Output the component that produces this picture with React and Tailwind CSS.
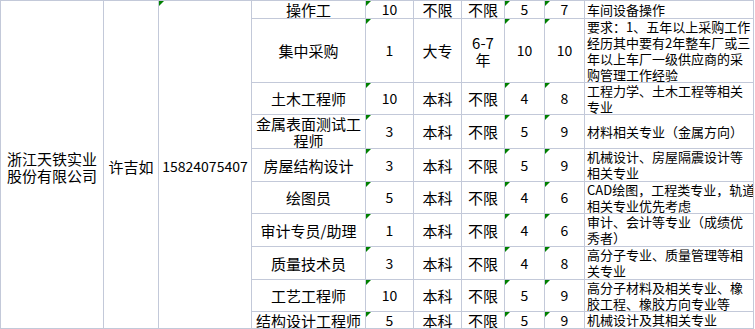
import React from 'react';

const rows = [
  { pos: ['操作工'], count: '10', edu: '不限', exp: ['不限'], min: '5', max: '7', desc: ['车间设备操作'] },
  {
    pos: ['集中采购'], count: '1', edu: '大专', exp: ['6-7', '年'], min: '10', max: '10',
    desc: ['要求：1、五年以上采购工作', '经历其中要有2年整车厂或三', '年以上车厂一级供应商的采', '购管理工作经验'],
  },
  { pos: ['土木工程师'], count: '10', edu: '本科', exp: ['不限'], min: '4', max: '8', desc: ['工程力学、土木工程等相关', '专业'] },
  { pos: ['金属表面测试工', '程师'], count: '3', edu: '本科', exp: ['不限'], min: '5', max: '9', desc: ['材料相关专业（金属方向）'] },
  { pos: ['房屋结构设计'], count: '3', edu: '本科', exp: ['不限'], min: '5', max: '9', desc: ['机械设计、房屋隔震设计等', '相关专业'] },
  { pos: ['绘图员'], count: '5', edu: '本科', exp: ['不限'], min: '4', max: '6', desc: ['CAD绘图，工程类专业，轨道', '相关专业优先考虑'] },
  { pos: ['审计专员/助理'], count: '1', edu: '本科', exp: ['不限'], min: '4', max: '6', desc: ['审计、会计等专业（成绩优', '秀者）'] },
  { pos: ['质量技术员'], count: '3', edu: '本科', exp: ['不限'], min: '4', max: '8', desc: ['高分子专业、质量管理等相', '关专业'] },
  { pos: ['工艺工程师'], count: '10', edu: '本科', exp: ['不限'], min: '5', max: '9', desc: ['高分子材料及相关专业、橡', '胶工程、橡胶方向专业等'] },
  { pos: ['结构设计工程师'], count: '5', edu: '本科', exp: ['不限'], min: '5', max: '9', desc: ['机械设计及其相关专业'] },
];

// green "number stored as text" marker
function Flag() {
  return (
    <svg className="absolute top-0 left-0" width="5" height="5" viewBox="0 0 5 5">
      <polygon points="0,0 5,0 0,5" fill="#008000" />
    </svg>
  );
}

function Cell({ children, flag, num }) {
  return (
    <div className={`relative flex flex-col items-center justify-center text-center border-r border-b border-[#c3c9d9] overflow-hidden whitespace-nowrap ${num ? 'text-[14px]' : ''}`}>
      {flag && <Flag />}
      {children}
    </div>
  );
}

function Lines({ lines }) {
  return lines.map((l, i) => <span key={i}>{l}</span>);
}

export default function App() {
  return (
    <div className="bg-white min-h-screen text-black" style={{ fontFamily: '"Noto Sans CJK SC", "Noto Sans", sans-serif' }}>
      <div className="grid w-fit grid-cols-[103px_55px_93px_114px_48px_48px_43px_40px_40px_169px] grid-rows-[18px_64px_32px_34px_33px_32px_33px_33px_32px_17px] border-l border-t border-[#c3c9d9] text-[15px] leading-[17px]">
        <div className="row-span-10 flex flex-col items-center justify-center border-r border-b border-[#c3c9d9] pt-1">
          <span>浙江天铁实业</span>
          <span>股份有限公司</span>
        </div>
        <div className="row-span-10 flex items-center justify-center border-r border-b border-[#c3c9d9] pt-1">许吉如</div>
        <div className="relative row-span-10 flex items-center justify-center border-r border-b border-[#c3c9d9] pt-1 text-[14px]">
          <Flag />
          15824075407
        </div>

        {rows.map((r, i) => (
          <React.Fragment key={i}>
            <Cell><Lines lines={r.pos} /></Cell>
            <Cell flag num>{r.count}</Cell>
            <Cell>{r.edu}</Cell>
            <Cell><Lines lines={r.exp} /></Cell>
            <Cell flag num>{r.min}</Cell>
            <Cell flag num>{r.max}</Cell>
            <div className="flex flex-col justify-center pl-[2px] border-r border-b border-[#c3c9d9] overflow-hidden whitespace-nowrap text-[13px] leading-[16px]">
              <Lines lines={r.desc} />
            </div>
          </React.Fragment>
        ))}
      </div>
    </div>
  );
}
